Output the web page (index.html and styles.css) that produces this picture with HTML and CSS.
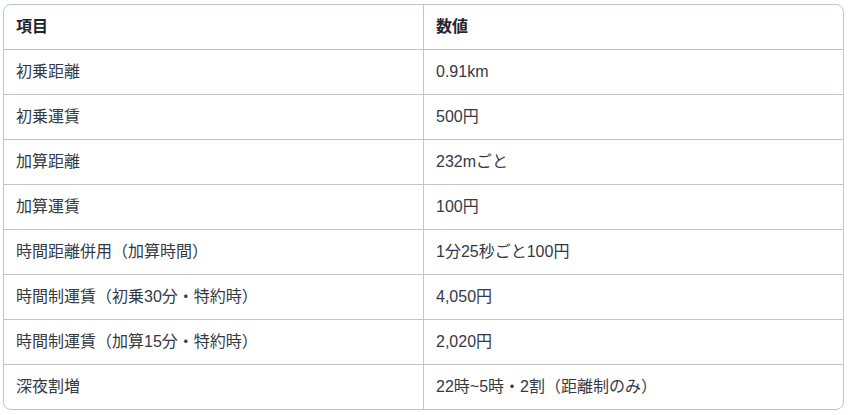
FILE: index.html
```html
<!DOCTYPE html>
<html lang="ja">
<head>
<meta charset="utf-8">
<link rel="stylesheet" href="styles.css">
</head>
<body>
<div class="table-wrap">
<table class="fare-table">
<thead>
<tr><th>項目</th><th>数値</th></tr>
</thead>
<tbody>
<tr><td>初乗距離</td><td>0.91km</td></tr>
<tr><td>初乗運賃</td><td>500円</td></tr>
<tr><td>加算距離</td><td>232mごと</td></tr>
<tr><td>加算運賃</td><td>100円</td></tr>
<tr><td>時間距離併用（加算時間）</td><td>1分25秒ごと100円</td></tr>
<tr><td>時間制運賃（初乗30分・特約時）</td><td>4,050円</td></tr>
<tr><td>時間制運賃（加算15分・特約時）</td><td>2,020円</td></tr>
<tr><td>深夜割増</td><td>22時~5時・2割（距離制のみ）</td></tr>
</tbody>
</table>
</div>
</body>
</html>
```
FILE: styles.css
```css
html, body {
  margin: 0;
  padding: 0;
  background: #ffffff;
}
body {
  padding: 4px 4px 0 3px;
  font-family: "Liberation Sans", "Noto Sans CJK JP", sans-serif;
  font-size: 16px;
  color: #333a44;
}
.table-wrap {
  border: 1px solid #bcc6d0;
  border-radius: 8px;
  overflow: hidden;
}
.fare-table {
  width: 100%;
  border-collapse: separate;
  border-spacing: 0;
  table-layout: fixed;
}
.fare-table th,
.fare-table td {
  text-align: left;
  padding: 12px 12px;
  line-height: 20px;
  border-bottom: 1px solid #bcc6d0;
}
.fare-table th:first-child,
.fare-table td:first-child {
  width: 395px;
  border-right: 1px solid #bcc6d0;
}
.fare-table tbody tr:last-child td {
  border-bottom: none;
}
.fare-table th {
  font-weight: 700;
  color: #1e2530;
}
```
